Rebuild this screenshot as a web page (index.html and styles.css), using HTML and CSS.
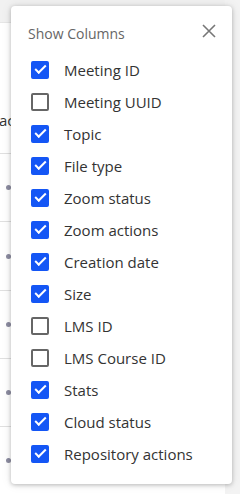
FILE: index.html
```html
<!DOCTYPE html>
<html>
<head>
<meta charset="utf-8">
<link rel="stylesheet" href="styles.css">
</head>
<body>
<div class="page">
  <div class="table">
    <div class="thead"></div>
    <div class="hrow"><span class="htext">actions</span></div>
    <div class="row"><span class="dot"></span></div>
    <div class="row"><span class="dot"></span></div>
    <div class="row"><span class="dot"></span></div>
    <div class="row"><span class="dot"></span></div>
    <div class="row last"><span class="dot"></span></div>
  </div>
  <div class="track"></div>
</div>

<div class="popup">
  <div class="popup-head">
    <span class="title">Show Columns</span>
    <svg class="close" width="14" height="14" viewBox="0 0 14 14"><path d="M1 1L13 13M13 1L1 13" stroke="#777" stroke-width="1.6" fill="none"/></svg>
  </div>
  <ul class="list">
    <li><span class="cb on"></span>Meeting ID</li>
    <li><span class="cb"></span>Meeting UUID</li>
    <li><span class="cb on"></span>Topic</li>
    <li><span class="cb on"></span>File type</li>
    <li><span class="cb on"></span>Zoom status</li>
    <li><span class="cb on"></span>Zoom actions</li>
    <li><span class="cb on"></span>Creation date</li>
    <li><span class="cb on"></span>Size</li>
    <li><span class="cb"></span>LMS ID</li>
    <li><span class="cb"></span>LMS Course ID</li>
    <li><span class="cb on"></span>Stats</li>
    <li><span class="cb on"></span>Cloud status</li>
    <li><span class="cb on"></span>Repository actions</li>
  </ul>
</div>
</body>
</html>
```
FILE: styles.css
```css
html, body {
  margin: 0;
  padding: 0;
  background: #fff;
  font-family: "Open Sans", "Noto Sans", sans-serif;
  overflow: hidden;
}
.page {
  display: flex;
  width: 240px;
  height: 494px;
}
.table {
  flex: 1;
  display: flex;
  flex-direction: column;
}
.thead {
  height: 22px;
  background: #f1f1f1;
  border-bottom: 1px solid #e6e6e6;
}
.hrow {
  height: 133px;
  border-bottom: 1px solid #e0e0e0;
  display: flex;
  align-items: flex-end;
  padding-bottom: 24px;
  box-sizing: border-box;
}
.htext {
  margin-left: -1px;
  font-size: 15px;
  line-height: 18px;
  color: #333;
  white-space: nowrap;
}
.row {
  height: 68px;
  border-bottom: 1px solid #e0e0e0;
  display: flex;
  align-items: center;
  padding-left: 6px;
}
.row.last { border-bottom: none; }
.dot {
  width: 5px;
  height: 5px;
  border-radius: 50%;
  background: #8c8ca0;
}
.track {
  width: 15px;
  background: #f3f3f3;
}
.popup {
  position: absolute;
  left: 11px;
  top: 6px;
  width: 221px;
  height: 478px;
  background: #fff;
  border-radius: 4px;
  box-shadow: 0 1px 4px rgba(0,0,0,0.25), 0 0 12px rgba(0,0,0,0.08);
  box-sizing: border-box;
  padding: 17px 0 0 20px;
}
.popup-head {
  display: flex;
  justify-content: space-between;
  align-items: center;
  height: 20px;
  padding-right: 16px;
}
.title {
  font-size: 14px;
  color: #666;
  margin-left: -3px;
}
.close { margin-top: -5px; }
.list {
  list-style: none;
  margin: 11px 0 0 0;
  padding: 0;
}
.list li {
  display: flex;
  align-items: center;
  height: 32px;
  font-size: 15px;
  color: #333;
}
.cb {
  width: 18px;
  height: 18px;
  box-sizing: border-box;
  border: 2px solid #666;
  border-radius: 2px;
  margin-right: 15px;
  flex: none;
  position: relative;
}
.cb.on {
  background: #1456f5;
  border-color: #1456f5;
}
.cb.on::after {
  content: "";
  position: absolute;
  top: 2px;
  left: 2px;
  width: 9px;
  height: 4px;
  border-left: 2px solid #fff;
  border-bottom: 2px solid #fff;
  transform: rotate(-45deg);
}
```
